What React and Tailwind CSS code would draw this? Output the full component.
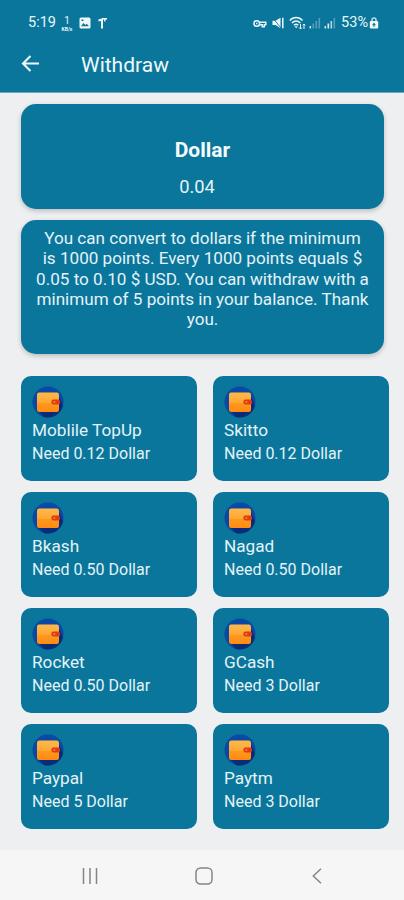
const methods = [
  { name: 'Moblile TopUp', need: '0.12' },
  { name: 'Skitto', need: '0.12' },
  { name: 'Bkash', need: '0.50' },
  { name: 'Nagad', need: '0.50' },
  { name: 'Rocket', need: '0.50' },
  { name: 'GCash', need: '3' },
  { name: 'Paypal', need: '5' },
  { name: 'Paytm', need: '3' },
];

const WalletIcon = () => (
  <svg className="block h-8 w-8" viewBox="0 0 32 32">
    <defs>
      <linearGradient id="wallet" x1="0" y1="0" x2="0" y2="1">
        <stop offset="0" stopColor="#ffb84a" />
        <stop offset="0.5" stopColor="#ffa936" />
        <stop offset="0.55" stopColor="#ff981e" />
        <stop offset="1" stopColor="#ff8a14" />
      </linearGradient>
    </defs>
    <circle cx="16" cy="16" r="15.5" fill="#0a48a6" />
    <path d="M6 25L12 31A15.500 15.500 0 0 0 31 19.500L26 8Z" fill="#0a2c78" />
    <rect x="5" y="6.500" width="22" height="19.500" rx="2.200" fill="url(#wallet)" />
    <rect x="19.500" y="13.500" width="8.500" height="5" rx="1.800" fill="#dc3d12" />
    <circle cx="22.300" cy="16" r="1" fill="#f58a35" />
  </svg>
);

const SignalIcon = ({ level }) => (
  <svg className="block h-[12px] w-[12px]" viewBox="0 0 12 12" fill="#fff">
    <rect x="0.500" y="9" width="1.600" height="2.500" opacity="0.800" />
    <rect x="3.500" y="6.500" width="1.600" height="5" opacity={level > 1 ? 0.85 : 0.3} />
    <rect x="6.500" y="4" width="1.600" height="7.500" opacity={level > 1 ? 0.7 : 0.3} />
    <rect x="9.500" y="1" width="1.600" height="10.500" opacity="0.300" />
  </svg>
);

const StatusBar = () => (
  <div className="flex h-[46px] items-center pl-[28px] pr-[25px] text-[14.5px] text-[#e8f6fa]">
    <span>5:19</span>
    <div className="ml-[4px] flex w-[14px] flex-col items-center pt-px leading-none">
      <span className="text-[10px] leading-[10px]">1</span>
      <span className="text-[5px] font-bold leading-[6px]">KB/s</span>
    </div>
    <svg className="ml-[5px] h-[12px] w-[12px]" viewBox="0 0 12 12">
      <rect x="0.500" y="0.500" width="11" height="11" rx="1.500" fill="#f0fafd" />
      <path d="M2 9.300l2.500-3.200 1.900 2 1.300-1.400L10 9.300z" fill="#0b769b" />
      <rect x="2.500" y="2.500" width="2" height="1.500" fill="#0b769b" />
    </svg>
    <svg className="ml-[7px] h-[12px] w-[10px]" viewBox="0 0 10 12" fill="none" stroke="#f0fafd">
      <path d="M0.500 3.500L4 2.500v9" strokeWidth="2" />
      <path d="M4 1.700h5M6.800 4.500V2" strokeWidth="1.400" />
    </svg>

    <div className="ml-auto flex items-center">
      <svg className="h-[9px] w-[14px]" viewBox="0 0 14 9" fill="none" stroke="#e8f6fa" strokeWidth="1.500">
        <circle cx="3.800" cy="4.500" r="2.800" />
        <path d="M6.500 3.300h6.300v2.500h-1.500v2H9.200v-2H6.500M3 4.500h1.500" />
      </svg>
      <svg className="ml-[5px] h-[12px] w-[12px]" viewBox="0 0 12 12">
        <path d="M0.500 3.800h3L8.500 0.800v10.400L3.500 8h-3z" fill="#f0fafd" />
        <path d="M0.500 0.500l8.500 10.500" stroke="#0b769b" strokeWidth="0.900" />
        <path d="M10.800 0.800v10.400" stroke="#f0fafd" strokeWidth="1.500" />
      </svg>
      <svg className="ml-[5px] h-[14px] w-[17px]" viewBox="0 0 17 14" fill="none" stroke="#e8f6fa" strokeWidth="1.400">
        <path d="M0.800 4.500c3.500-4 9.200-4 12.700 0M2.900 6.900c2.500-2.600 6-2.600 8.500 0M5 9.200c1.300-1.300 3-1.300 4.300 0" />
        <path d="M5.500 10.300h3.300l-1.600 2z" fill="#e8f6fa" stroke="none" />
        <path d="M11.500 8v5M10 11.500l1.500 1.500L13 11.500M15 13V8M13.800 9.300L15 8l1.300 1.300" strokeWidth="1" />
      </svg>
      <div className="ml-[3px] flex gap-[3px]">
        <SignalIcon level={1} />
        <SignalIcon level={2} />
      </div>
      <span className="ml-[5px]">53%</span>
      <svg className="ml-px h-[12px] w-[10px]" viewBox="0 0 10 12">
        <path d="M3 5V3a2 2 0 0 1 4 0v2" fill="none" stroke="#b9dce7" strokeWidth="1.500" />
        <rect x="0.800" y="4" width="8.400" height="7.500" rx="1.200" fill="#f0fafd" />
        <path d="M5 5.500l2 2.700H5.500V10h-1V8.200H3z" fill="#0b769b" />
      </svg>
    </div>
  </div>
);

const Header = () => (
  <header className="h-[93px] border-b border-[#69a9c0] bg-[#0b769b]">
    <StatusBar />
    <div className="flex h-[35px] items-center pl-[21px]">
      <svg className="h-[17px] w-[19px]" viewBox="0 0 19 17" fill="none" stroke="#f0fafd" strokeWidth="2.100">
        <path d="M18 8.500H2M9.500 1L2 8.500 9.500 16" />
      </svg>
      <h1 className="ml-[41px] pt-[3px] text-[21px] leading-7 text-[#eef9fc]">Withdraw</h1>
    </div>
  </header>
);

const MethodCard = ({ name, need }) => (
  <div className="h-[105px] rounded-[10px] bg-[#0b769b] pl-[11px] pt-[10px] text-[#e3f3f8]">
    <WalletIcon />
    <p className="mt-px text-[17.2px] leading-[23px]">{name}</p>
    <p className="text-base leading-[23px]">Need {need} Dollar</p>
  </div>
);

const NavBar = () => (
  <nav className="flex h-[50px] items-center bg-[#f6f6f6] pl-[82px] pt-[2px]">
    <svg className="h-4 w-4" viewBox="0 0 16 16" stroke="#858585" strokeWidth="1.500">
      <path d="M1.500 0v16M8 0v16M14.500 0v16" />
    </svg>
    <svg className="ml-[96.5px] h-[18px] w-[18px]" viewBox="0 0 18 18" fill="none" stroke="#858585" strokeWidth="1.500">
      <rect x="1" y="1" width="16" height="16" rx="4.500" />
    </svg>
    <svg className="ml-[99.5px] h-4 w-[10px]" viewBox="0 0 10 16" fill="none" stroke="#858585" strokeWidth="1.500">
      <path d="M9 0.800L1.300 8 9 15.200" />
    </svg>
  </nav>
);

const App = () => {
  return (
    <div className="flex h-[900px] w-[404px] flex-col bg-[#edeff1] font-[Roboto,sans-serif]">
      <Header />

      <main className="flex-1 pl-[21px] pt-[11px]">
        <div className="flex h-[105px] w-[363px] flex-col items-center rounded-[15px] bg-[#0b769b] pt-[34px] shadow-[0_2px_5px_rgba(0,0,0,0.22)]">
          <h2 className="text-[21px] font-bold leading-6 text-[#f4fbfd]">Dollar</h2>
          <p className="mr-[11px] mt-[13px] text-[18.3px] leading-6 text-[#e3f3f8]">0.04</p>
        </div>

        <div className="mt-[11px] h-[134px] w-[363px] rounded-[15px] bg-[#0b769b] pt-[8px] text-center shadow-[0_2px_5px_rgba(0,0,0,0.22)]">
          <p className="whitespace-nowrap text-[17.1px] leading-[20.3px] text-[#e3f3f8]">
            You can convert to dollars if the minimum
            <br />
            is 1000 points. Every 1000 points equals $
            <br />
            0.05 to 0.10 $ USD. You can withdraw with a
            <br />
            minimum of 5 points in your balance. Thank
            <br />
            you.
          </p>
        </div>

        <div className="mt-[22px] grid w-[368px] grid-cols-2 gap-x-4 gap-y-[11px]">
          {methods.map((method) => (
            <MethodCard key={method.name} name={method.name} need={method.need} />
          ))}
        </div>
      </main>

      <NavBar />
    </div>
  );
};

export default App;
